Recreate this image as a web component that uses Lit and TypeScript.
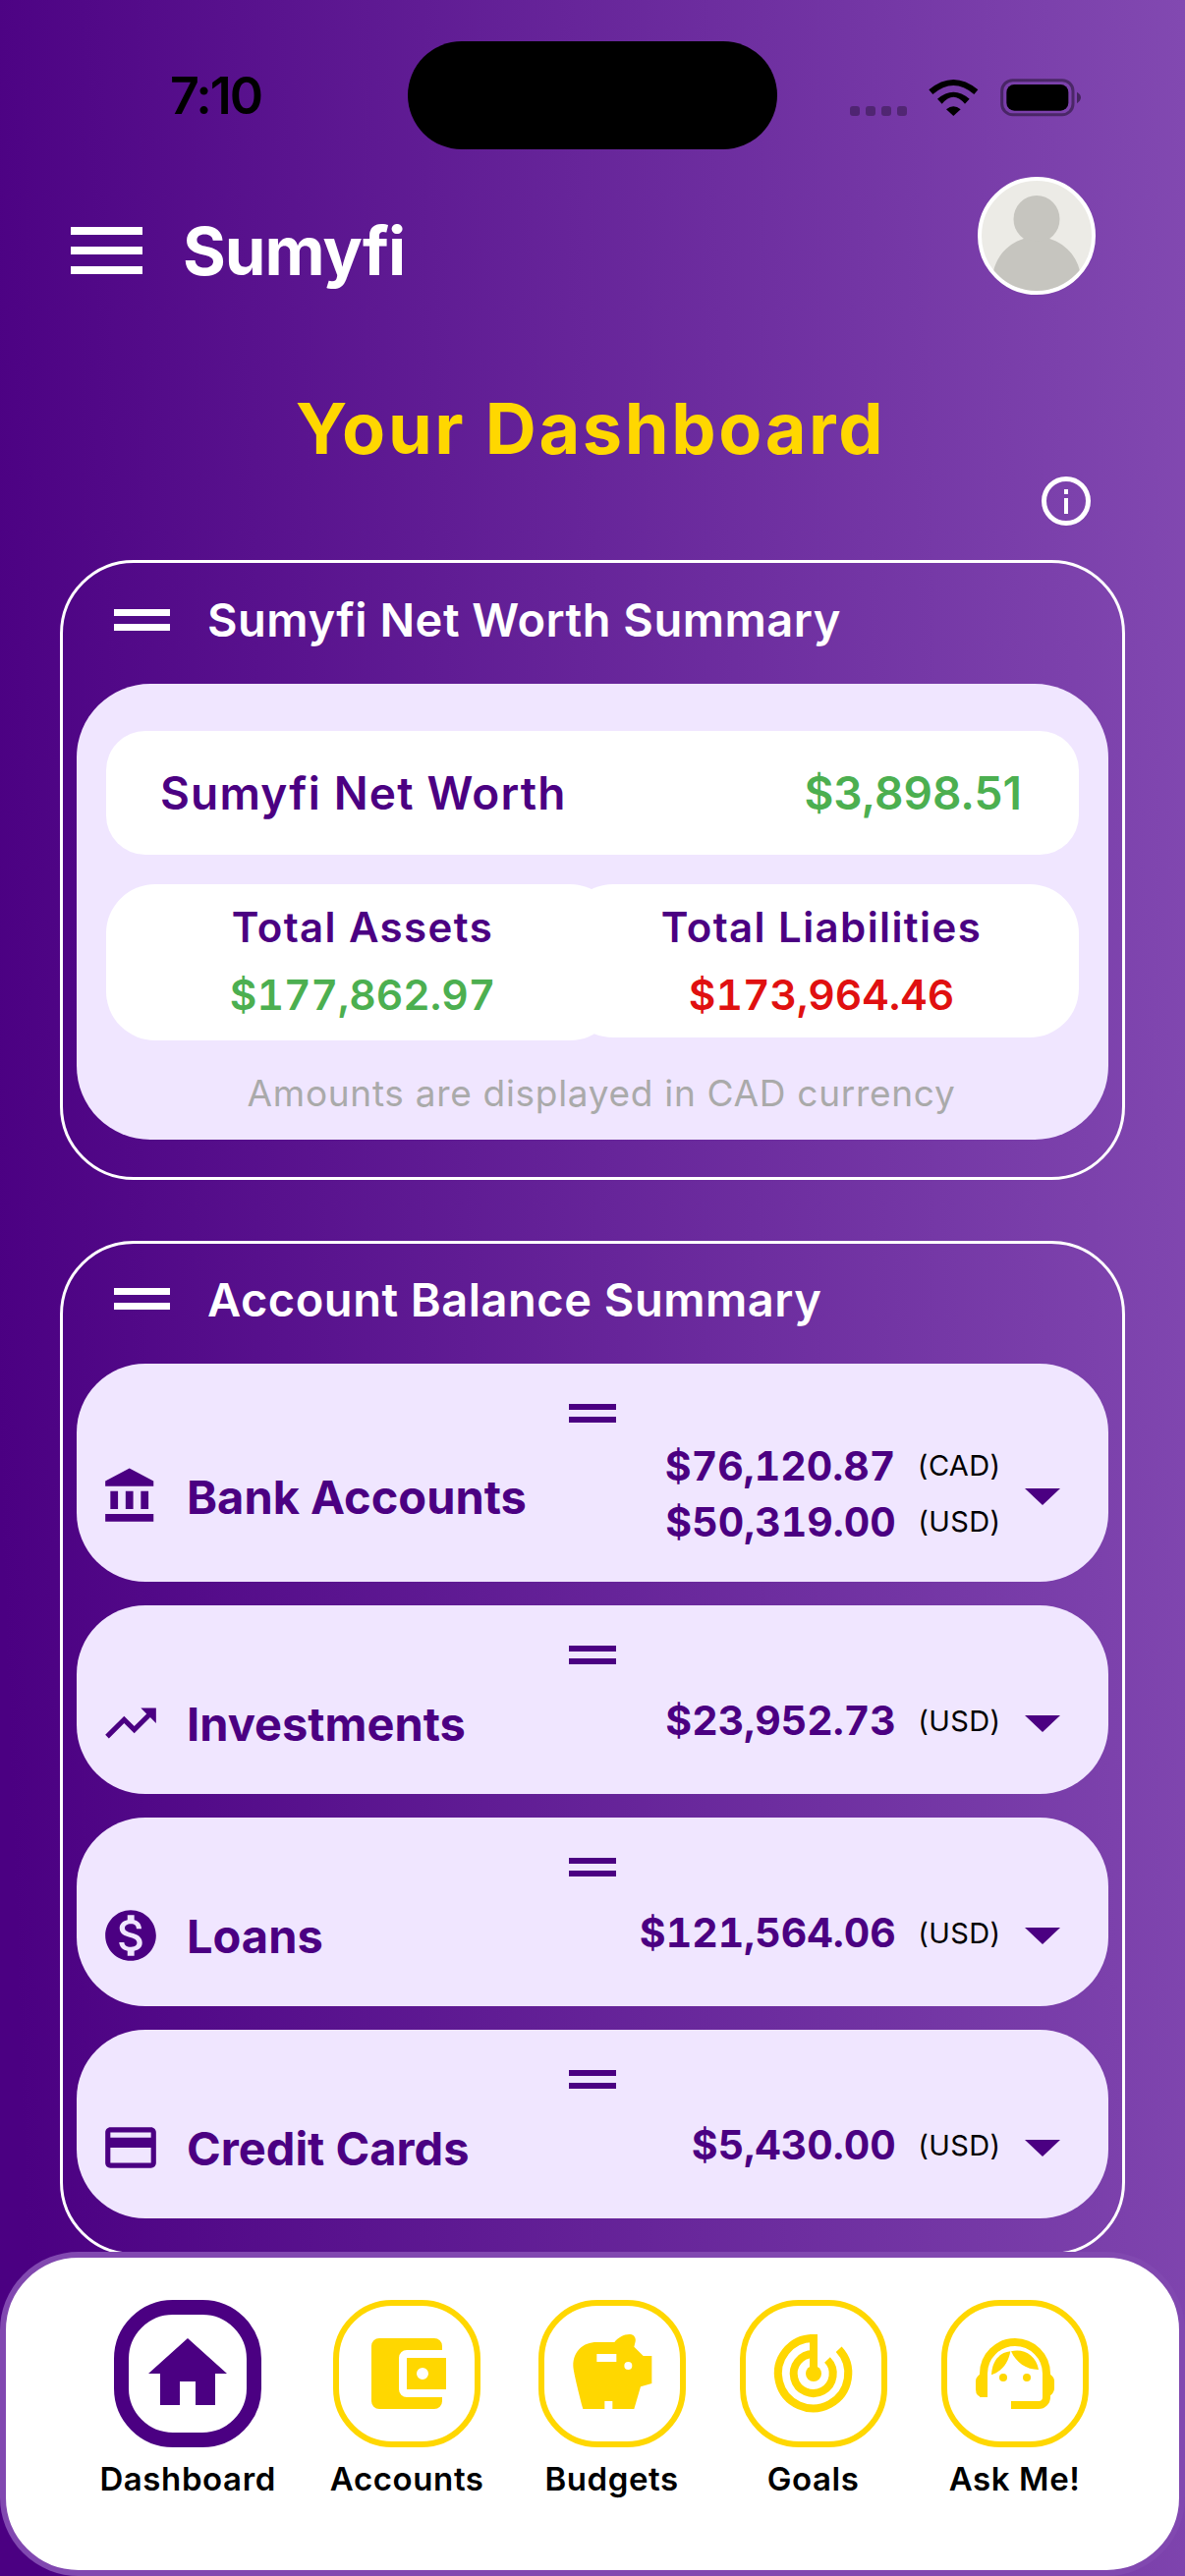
import { LitElement, html, css, svg } from 'lit';
import { customElement } from 'lit/decorators.js';

const ICONS: Record<string, ReturnType<typeof svg>> = {
  bank: svg`<path d="M4 10v7h3v-7H4zm6 0v7h3v-7h-3zM2 22h19v-3H2v3zm14-12v7h3v-7h-3zm-4.5-9L2 6v2h19V6l-9.5-5z"/>`,
  trend: svg`<path d="M16 6l2.29 2.29-4.88 4.88-4-4L2 16.59 3.41 18l6-6 4 4 6.3-6.29L22 12V6z"/>`,
  loan: svg`<path d="M12 2C6.48 2 2 6.48 2 12s4.48 10 10 10 10-4.48 10-10S17.52 2 12 2zm1.41 16.09V20h-2.67v-1.93c-1.71-.36-3.16-1.46-3.27-3.4h1.96c.1 1.05.82 1.87 2.65 1.87 1.96 0 2.4-.98 2.4-1.59 0-.83-.44-1.61-2.67-2.14-2.48-.6-4.18-1.62-4.18-3.67 0-1.72 1.39-2.84 3.11-3.21V4h2.67v1.95c1.86.45 2.79 1.86 2.85 3.39H14.3c-.05-1.11-.64-1.87-2.22-1.87-1.5 0-2.4.68-2.4 1.64 0 .84.65 1.39 2.67 1.91s4.18 1.39 4.18 3.91c-.01 1.83-1.38 2.83-3.12 3.16z"/>`,
  card: svg`<path d="M20 4H4c-1.11 0-1.99.89-1.99 2L2 18c0 1.11.89 2 2 2h16c1.11 0 2-.89 2-2V6c0-1.11-.89-2-2-2zm0 14H4v-6h16v6zm0-10H4V6h16v2z"/>`,
};

const ACCOUNTS = [
  { icon: 'bank', label: 'Bank Accounts', tall: true, amounts: [['$76,120.87', '(CAD)'], ['$50,319.00', '(USD)']] },
  { icon: 'trend', label: 'Investments', tall: false, amounts: [['$23,952.73', '(USD)']] },
  { icon: 'loan', label: 'Loans', tall: false, amounts: [['$121,564.06', '(USD)']] },
  { icon: 'card', label: 'Credit Cards', tall: false, amounts: [['$5,430.00', '(USD)']] },
];

// nav glyphs are drawn in 3x crop coords, so each viewBox is a 300 unit window round the button centre
const NAV = [
  {
    label: 'Dashboard',
    active: true,
    box: '142 2366 100 100',
    glyph: svg`<path fill="#4b0082" d="M192 2380 L232 2416 H220 V2448 H200 V2424 H184 V2448 H164 V2416 H152Z"/>`,
  },
  {
    label: 'Accounts',
    box: '78 78 300 300',
    glyph: svg`<path fill="#ffd700" d="M144 120H312a24 24 0 0 1 24 24V156H228a24 24 0 0 0-24 24V276a24 24 0 0 0 24 24H336V312a24 24 0 0 1-24 24H144a24 24 0 0 1-24-24V144a24 24 0 0 1 24-24Z"/>
      <path fill="#ffd700" fill-rule="evenodd" d="M228 180H348V276H228ZM276 210a18 18 0 1 0 0 36a18 18 0 1 0 0-36Z"/>`,
  },
  {
    label: 'Budgets',
    box: '701 78 300 300',
    glyph: svg`<path fill="#ffd700" fill-rule="evenodd" d="M804 132H858C870 116 890 106 908 108C920 110 924 122 922 130L918 146L946 174H972V258L938 268L918 336H852V312H828V336H762C752 300 732 220 732 204C732 160 762 132 804 132ZM804 168V192H864V168ZM900 192a12 12 0 1 0 0 24a12 12 0 1 0 0-24Z"/>`,
  },
  {
    label: 'Goals',
    box: '84 78 300 300',
    glyph: svg`<g fill="none" stroke="#ffd700" stroke-width="24"><path d="M234 120A107 107 0 1 0 311 154"/><path d="M234 168A60 60 0 1 0 276 186"/></g>
      <rect x="222" y="108" width="24" height="120" fill="#ffd700"/><circle cx="234" cy="228" r="24" fill="#ffd700"/>`,
  },
  {
    label: 'Ask Me!',
    box: '696 78 300 300',
    glyph: svg`<path fill="none" stroke="#ffd700" stroke-width="24" d="M750 300V228A96 96 0 0 1 942 228V300a24 24 0 0 1-24 24H834"/>
      <g fill="#ffd700"><path d="M738 230L732 236Q726 242 726 250V276Q726 300 750 300H762V230Z"/><path d="M954 230Q966 240 966 250V272Q966 285 954 295Z"/>
      <path d="M774 232C776 190 796 164 832 160C826 195 805 222 774 232Z"/><path d="M834 160C870 150 910 170 918 216C880 216 850 195 834 160Z"/>
      <circle cx="810" cy="240" r="12"/><circle cx="882" cy="240" r="12"/></g>`,
  },
];

@customElement('app-root')
export class AppRoot extends LitElement {
  static styles = css`
:host {
  display: block;
  position: relative;
  width: 1206px;
  height: 2622px;
  overflow: hidden;
  background: linear-gradient(88deg, #4b0082 0%, #4b0082 3%, #8249b1 100%);
  font-family: Inter, "Liberation Sans", sans-serif;
}

.status {
  display: grid;
  grid-template-columns: 415px 376px 1fr;
  align-items: center;
  padding-top: 42px;
}

.time {
  padding-left: 173px;
  font-size: 52px;
  font-weight: 600;
  letter-spacing: -2px;
  color: #000;
}

.island {
  height: 110px;
  border-radius: 55px;
  background: #000;
}

.status-icons {
  margin-left: 59px;
  display: block;
}

.topbar {
  display: flex;
  align-items: center;
  margin-top: 28px;
  padding: 0 91px 0 72px;
}

.burger {
  display: flex;
  flex-direction: column;
  gap: 12px;
  width: 73px;
  margin-top: 30px;
}

.burger i {
  display: block;
  height: 8px;
  background: #fff;
}

.brand {
  margin: 30px 0 0 41px;
  font-size: 67px;
  font-weight: 700;
  color: #fff;
  flex: 1;
  letter-spacing: -1px;
}

.avatar {
  display: block;
  width: 120px;
  height: 120px;
}

h1 {
  margin: 92px 0 0;
  text-align: center;
  font-size: 72px;
  line-height: 88px;
  font-weight: 700;
  color: #ffd700;
  letter-spacing: 2.6px;
  padding-right: 4px;
}

.info-row {
  display: flex;
  justify-content: flex-end;
  padding-right: 96px;
  margin-top: 5px;
}

.info-row svg {
  display: block;
}

.card {
  box-sizing: border-box;
  width: 1084px;
  margin-left: 61px;
  border: 3px solid #fff;
  border-radius: 75px;
  padding: 0 14px;
}

.card.first {
  margin-top: 35px;
  padding-bottom: 38px;
}

.card + .card {
  margin-top: 62px;
}

.card-head {
  box-sizing: border-box;
  display: flex;
  align-items: center;
  gap: 38px;
  padding-left: 38px;
  font-size: 47px;
  font-weight: 600;
  letter-spacing: 0.5px;
  color: #fff;
}

.head-net {
  height: 123px;
  padding-bottom: 8px;
}

.head-acct {
  height: 122px;
  padding-bottom: 10px;
}

.grip {
  display: flex;
  flex-direction: column;
  gap: 8px;
  width: 57px;
  flex: none;
}

.grip i {
  display: block;
  height: 7px;
  background: currentColor;
}

.panel {
  box-sizing: border-box;
  height: 464px;
  padding: 48px 30px 0;
  background: #f0e6ff;
  border-radius: 75px;
}

.net {
  display: flex;
  justify-content: space-between;
  align-items: center;
  height: 126px;
  padding: 0 58px 0 55px;
  background: #fff;
  border-radius: 40px;
  font-size: 46px;
  font-weight: 600;
  color: #4b0082;
  letter-spacing: 1.2px;
}

.green {
  color: #4caf50;
}

.red {
  color: #e01010;
}

.net .green {
  letter-spacing: 0;
}

.totals {
  display: flex;
  align-items: flex-start;
  margin-top: 30px;
}

.total {
  box-sizing: border-box;
  display: flex;
  flex-direction: column;
  align-items: center;
  padding-top: 19px;
  background: #fff;
  border-radius: 50px;
  font-size: 42px;
  font-weight: 600;
  color: #4b0082;
  letter-spacing: 1.4px;
}

.total.a {
  width: 522px;
  height: 159px;
}

.total.l {
  width: 524px;
  height: 156px;
  margin-left: -56px;
}

.total span {
  line-height: 50px;
}

.total b {
  margin-top: 19px;
  line-height: 50px;
  font-size: 42.500px;
  font-weight: 600;
  letter-spacing: 0;
  font-variant-numeric: tabular-nums;
}

.note {
  margin-top: 31px;
  padding-left: 18px;
  text-align: center;
  font-size: 37px;
  line-height: 46px;
  color: #aaa;
  letter-spacing: 0.7px;
}

.rows {
  display: flex;
  flex-direction: column;
  gap: 24px;
  padding-bottom: 35px;
}

.row {
  display: flex;
  flex-direction: column;
  padding: 41px 49px 12px 24px;
  background: #f0e6ff;
  border-radius: 70px;
  color: #4b0082;
}

.row .grip {
  width: 48px;
  gap: 7px;
  align-self: center;
  margin-left: 25px;
}

.row .grip i {
  height: 6px;
}

.row-body {
  display: flex;
  align-items: center;
  height: 120px;
}

.row-body.tall {
  height: 150px;
}

.row-icon {
  flex: none;
  width: 62px;
  height: 62px;
  fill: #4b0082;
}

.row-label {
  margin-left: 26px;
  flex: 1;
  font-size: 47px;
  font-weight: 700;
}

.amounts {
  margin-bottom: 6px;
}

.amount {
  display: flex;
  justify-content: flex-end;
  align-items: center;
  gap: 22px;
  height: 57px;
  font-size: 41px;
  font-weight: 700;
  font-variant-numeric: tabular-nums;
}

.amount small {
  font-size: 29px;
  font-weight: 400;
  color: #000;
  letter-spacing: 0.3px;
}

.caret {
  flex: none;
  margin-left: 24px;
  width: 36px;
  height: 17px;
  fill: #4b0082;
}

/* sits over the bottom of the account card */
nav {
  position: absolute;
  left: 0;
  right: 0;
  bottom: 0;
  box-sizing: border-box;
  height: 330px;
  padding: 43px 0 0 3px;
  display: flex;
  justify-content: center;
  gap: 55px;
  background: #fff;
  border: 6px solid #8148b0;
  border-radius: 80px;
}

.tab {
  display: flex;
  flex-direction: column;
  align-items: center;
  min-width: 150px;
  font-size: 33px;
  font-weight: 600;
  letter-spacing: 0.6px;
  color: #000;
}

.tab-btn {
  box-sizing: border-box;
  display: flex;
  align-items: center;
  justify-content: center;
  width: 150px;
  height: 150px;
  border: 6px solid #ffd700;
  border-radius: 60px;
  margin-bottom: 12px;
}

.tab-btn.on {
  border: 15px solid #4b0082;
}

.tab-btn svg {
  flex: none;
  width: 100px;
  height: 100px;
}
  `;

  render() {
    return html`
      <div class="status">
        <div class="time">7:10</div>
        <div class="island"></div>
        <svg class="status-icons" width="270" height="70" viewBox="0 0 810 210">
          <g fill="#000" opacity=".3">
            <rect x="45" y="138" width="30" height="30" rx="9"/><rect x="93" y="138" width="30" height="30" rx="9"/>
            <rect x="141" y="138" width="30" height="30" rx="9"/><rect x="189" y="138" width="30" height="30" rx="9"/>
          </g>
          <path d="M286 88Q361 26 436 88L424 102Q361 48 298 102Z"/>
          <path d="M312 116Q361 74 410 116L396 131Q361 89 326 131Z"/>
          <path d="M339 148Q361 130 383 148L361 168Z"/>
          <rect x="509" y="59" width="217" height="105" rx="33" fill="none" stroke="#000" stroke-opacity=".4" stroke-width="9"/>
          <rect x="523" y="72" width="189" height="80" rx="24"/>
          <path d="M738 95Q750 102 750 112Q750 122 738 130Z" opacity=".45"/>
        </svg>
      </div>

      <div class="topbar">
        <div class="burger"><i></i><i></i><i></i></div>
        <div class="brand">Sumyfi</div>
        <svg class="avatar" viewBox="0 0 120 120">
          <defs><clipPath id="av"><circle cx="60" cy="60" r="56"/></clipPath></defs>
          <circle cx="60" cy="60" r="58" fill="#ecebe6" stroke="#fff" stroke-width="4"/>
          <g clip-path="url(#av)" fill="#c6c5bf">
            <ellipse cx="60" cy="43" rx="23.500" ry="24"/>
            <path d="M14 120L16 96C20 78 34 66 50 62Q60 70 70 62C86 66 100 78 104 96L106 120Z"/>
          </g>
        </svg>
      </div>

      <h1>Your Dashboard</h1>
      <div class="info-row">
        <svg width="50" height="50" viewBox="0 0 50 50">
          <circle cx="25" cy="25" r="22.500" fill="none" stroke="#fff" stroke-width="5"/>
          <rect x="23" y="22" width="4" height="16" fill="#fff"/>
          <rect x="23" y="13" width="4" height="5" fill="#fff"/>
        </svg>
      </div>

      <section class="card first">
        <div class="card-head head-net">
          <div class="grip"><i></i><i></i></div>
          <span>Sumyfi Net Worth Summary</span>
        </div>
        <div class="panel">
          <div class="net"><span>Sumyfi Net Worth</span><span class="green">$3,898.51</span></div>
          <div class="totals">
            <div class="total a"><span>Total Assets</span><b class="green">$177,862.97</b></div>
            <div class="total l"><span>Total Liabilities</span><b class="red">$173,964.46</b></div>
          </div>
          <div class="note">Amounts are displayed in CAD currency</div>
        </div>
      </section>

      <section class="card">
        <div class="card-head head-acct">
          <div class="grip"><i></i><i></i></div>
          <span>Account Balance Summary</span>
        </div>
        <div class="rows">
          ${ACCOUNTS.map(
            (a) => html`
              <div class="row">
                <div class="grip"><i></i><i></i></div>
                <div class="row-body ${a.tall ? 'tall' : ''}">
                  <svg class="row-icon" viewBox="0 0 24 24">${ICONS[a.icon]}</svg>
                  <div class="row-label">${a.label}</div>
                  <div class="amounts">
                    ${a.amounts.map(
                      ([v, c]) => html`<div class="amount"><span>${v}</span><small>${c}</small></div>`,
                    )}
                  </div>
                  <svg class="caret" viewBox="0 0 36 17"><path d="M0 0H36L18 17Z"/></svg>
                </div>
              </div>
            `,
          )}
        </div>
      </section>

      <nav>
        ${NAV.map(
          (n) => html`
            <div class="tab">
              <div class="tab-btn ${n.active ? 'on' : ''}">
                <svg viewBox=${n.box}>${n.glyph}</svg>
              </div>
              <span>${n.label}</span>
            </div>
          `,
        )}
      </nav>
    `;
  }
}

declare global {
  interface HTMLElementTagNameMap {
    'app-root': AppRoot;
  }
}
